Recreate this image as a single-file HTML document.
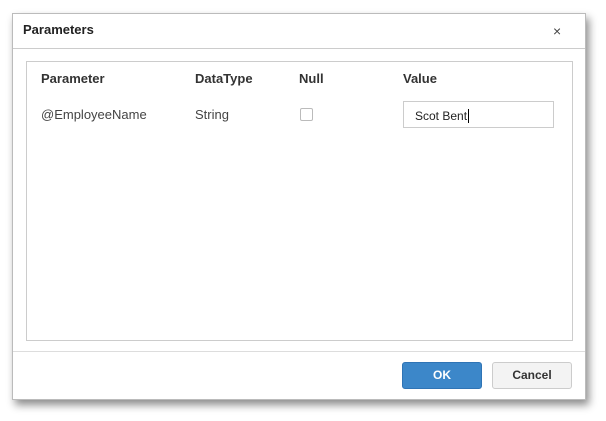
<!DOCTYPE html><html><head><style>
body{margin:0;width:606px;height:421px;background:#fff;font-family:"Liberation Sans",sans-serif;position:relative;overflow:hidden}
.d{position:absolute;left:12px;top:13px;width:574px;height:387px;background:#fff;border:1px solid #bbb;box-sizing:border-box;box-shadow:3px 5px 8px rgba(0,0,0,.45)}
.a{position:absolute}
</style></head><body>
<div class="d">
<div class="a" style="left:10px;top:8px;font-size:13px;font-weight:bold;color:#222">Parameters</div>
<div class="a" style="left:540px;top:9px;font-size:14px;color:#444">×</div>
<div class="a" style="left:0;top:34px;width:572px;border-top:1px solid #ccc"></div>
<div class="a" style="left:13px;top:47px;width:547px;height:280px;border:1px solid #ccc;box-sizing:border-box"></div>
<div class="a" style="left:28px;top:57px;font-size:13px;font-weight:bold;color:#333">Parameter</div>
<div class="a" style="left:182px;top:57px;font-size:13px;font-weight:bold;color:#333">DataType</div>
<div class="a" style="left:286px;top:57px;font-size:13px;font-weight:bold;color:#333">Null</div>
<div class="a" style="left:390px;top:57px;font-size:13px;font-weight:bold;color:#333">Value</div>
<div class="a" style="left:28px;top:93px;font-size:13px;color:#444">@EmployeeName</div>
<div class="a" style="left:182px;top:93px;font-size:13px;color:#444">String</div>
<div class="a" style="left:287px;top:94px;width:13px;height:13px;border:1px solid #bbb;box-sizing:border-box;border-radius:2px"></div>
<div class="a" style="left:390px;top:87px;width:151px;height:27px;border:1px solid #ccc;box-sizing:border-box;font-size:12px;color:#222;padding:7px 0 0 11px">Scot Bent<span style="border-left:1px solid #000;margin-left:1px"></span></div>
<div class="a" style="left:0;top:337px;width:572px;border-top:1px solid #ddd"></div>
<div class="a" style="left:389px;top:348px;width:80px;height:27px;background:#3c87c9;border:1px solid #2f74b5;box-sizing:border-box;border-radius:3px;color:#fff;font-size:12px;font-weight:bold;text-align:center;line-height:25px">OK</div>
<div class="a" style="left:479px;top:348px;width:80px;height:27px;background:#f3f3f3;border:1px solid #ccc;box-sizing:border-box;border-radius:3px;color:#333;font-size:12px;font-weight:bold;text-align:center;line-height:25px">Cancel</div>
</div>
</body></html>
